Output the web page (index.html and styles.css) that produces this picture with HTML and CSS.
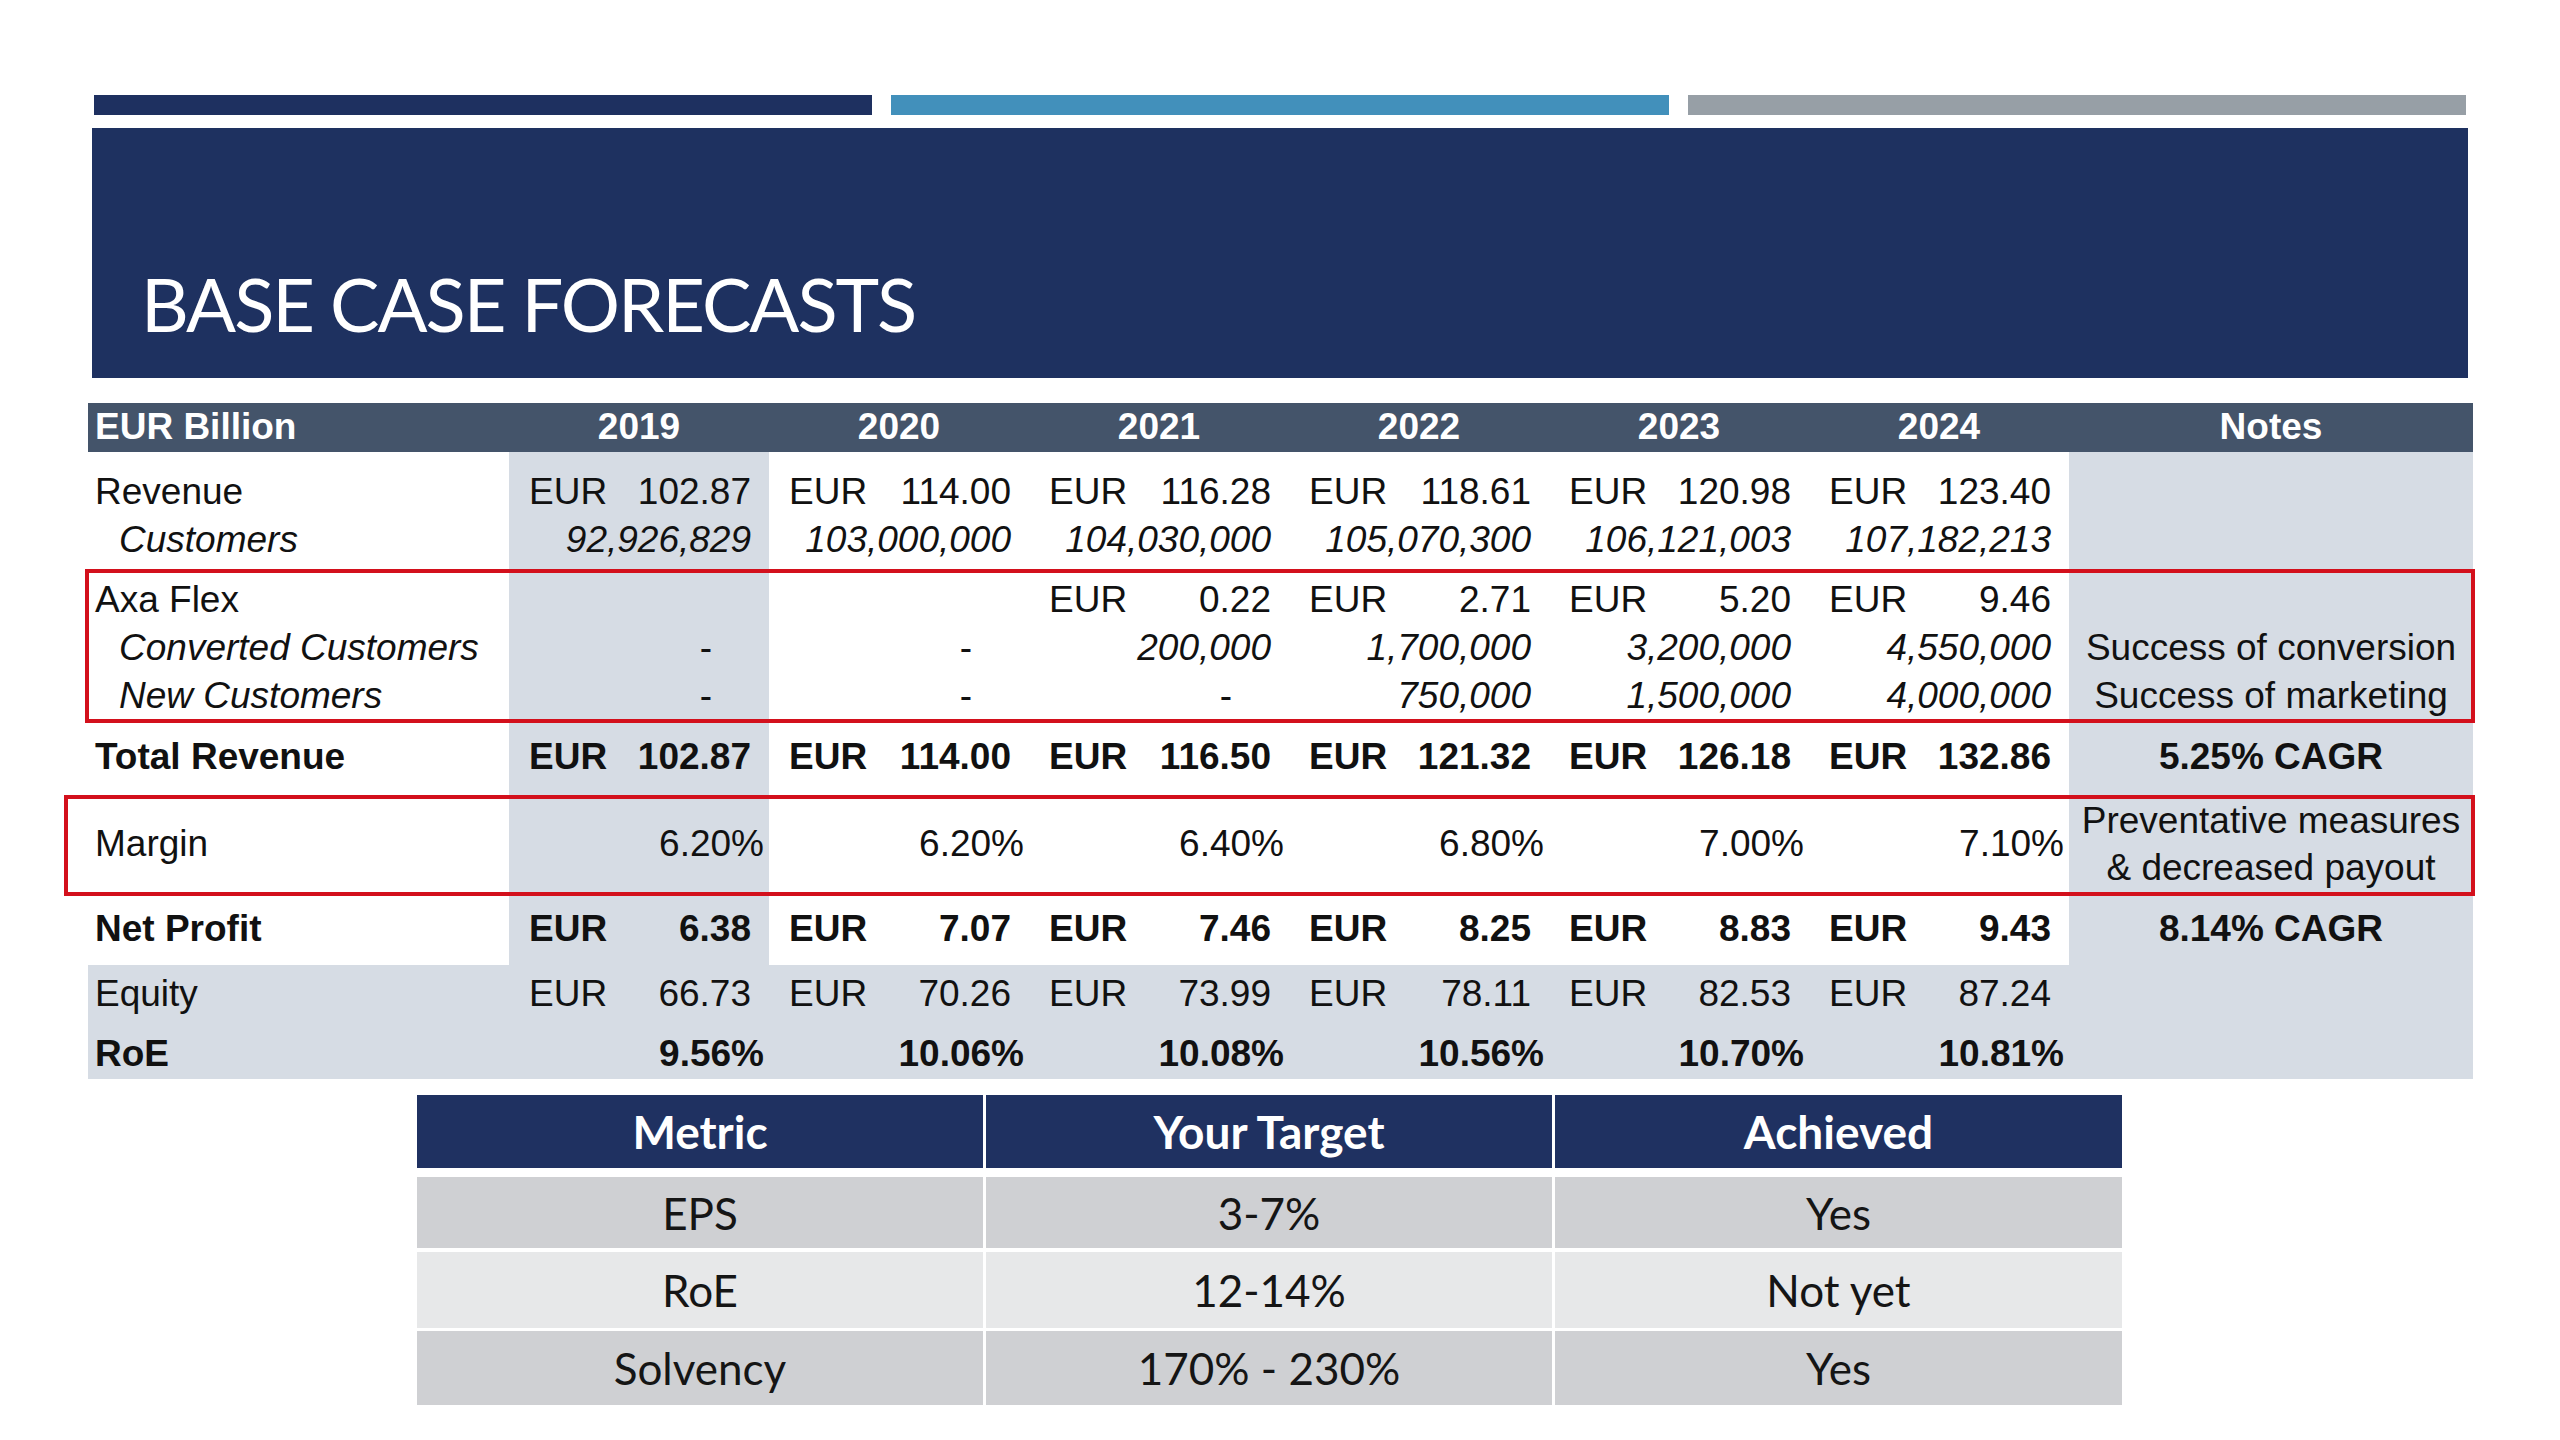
FILE: index.html
```html
<!DOCTYPE html>
<html lang="en">
<head>
<meta charset="utf-8">
<title>Base Case Forecasts</title>
<link rel="stylesheet" href="styles.css">
</head>
<body>
<div class="slide">
  <div class="bars">
    <div class="bar bar-navy"></div>
    <div class="bar bar-blue"></div>
    <div class="bar bar-gray"></div>
  </div>
  <div class="title-block">
    <h1 class="title">BASE CASE FORECASTS</h1>
  </div>

  <div class="fin">
    <div class="row head">
      <div class="c lbl">EUR Billion</div>
      <div class="c yr">2019</div>
      <div class="c yr">2020</div>
      <div class="c yr">2021</div>
      <div class="c yr">2022</div>
      <div class="c yr">2023</div>
      <div class="c yr">2024</div>
      <div class="c yr">Notes</div>
    </div>

    <div class="row r-rev">
      <div class="c lbl">Revenue</div>
      <div class="c y sh"><span>EUR</span><span>102.87</span></div>
      <div class="c y"><span>EUR</span><span>114.00</span></div>
      <div class="c y"><span>EUR</span><span>116.28</span></div>
      <div class="c y"><span>EUR</span><span>118.61</span></div>
      <div class="c y"><span>EUR</span><span>120.98</span></div>
      <div class="c y"><span>EUR</span><span>123.40</span></div>
      <div class="c note sh"></div>
    </div>

    <div class="row r-cust it">
      <div class="c lbl sub">Customers</div>
      <div class="c y num sh"><span>92,926,829</span></div>
      <div class="c y num"><span>103,000,000</span></div>
      <div class="c y num"><span>104,030,000</span></div>
      <div class="c y num"><span>105,070,300</span></div>
      <div class="c y num"><span>106,121,003</span></div>
      <div class="c y num"><span>107,182,213</span></div>
      <div class="c note sh"></div>
    </div>

    <div class="row r-axa">
      <div class="c lbl">Axa Flex</div>
      <div class="c y sh"></div>
      <div class="c y"></div>
      <div class="c y"><span>EUR</span><span>0.22</span></div>
      <div class="c y"><span>EUR</span><span>2.71</span></div>
      <div class="c y"><span>EUR</span><span>5.20</span></div>
      <div class="c y"><span>EUR</span><span>9.46</span></div>
      <div class="c note sh"></div>
    </div>

    <div class="row r-conv">
      <div class="c lbl sub it">Converted Customers</div>
      <div class="c y dash sh"><span>-</span></div>
      <div class="c y dash"><span>-</span></div>
      <div class="c y num it"><span>200,000</span></div>
      <div class="c y num it"><span>1,700,000</span></div>
      <div class="c y num it"><span>3,200,000</span></div>
      <div class="c y num it"><span>4,550,000</span></div>
      <div class="c note sh">Success of conversion</div>
    </div>

    <div class="row r-new">
      <div class="c lbl sub it">New Customers</div>
      <div class="c y dash sh"><span>-</span></div>
      <div class="c y dash"><span>-</span></div>
      <div class="c y dash"><span>-</span></div>
      <div class="c y num it"><span>750,000</span></div>
      <div class="c y num it"><span>1,500,000</span></div>
      <div class="c y num it"><span>4,000,000</span></div>
      <div class="c note sh">Success of marketing</div>
    </div>

    <div class="row r-total bold">
      <div class="c lbl">Total Revenue</div>
      <div class="c y sh"><span>EUR</span><span>102.87</span></div>
      <div class="c y"><span>EUR</span><span>114.00</span></div>
      <div class="c y"><span>EUR</span><span>116.50</span></div>
      <div class="c y"><span>EUR</span><span>121.32</span></div>
      <div class="c y"><span>EUR</span><span>126.18</span></div>
      <div class="c y"><span>EUR</span><span>132.86</span></div>
      <div class="c note sh">5.25% CAGR</div>
    </div>

    <div class="row r-margin">
      <div class="c lbl">Margin</div>
      <div class="c y pct sh"><span>6.20%</span></div>
      <div class="c y pct"><span>6.20%</span></div>
      <div class="c y pct"><span>6.40%</span></div>
      <div class="c y pct"><span>6.80%</span></div>
      <div class="c y pct"><span>7.00%</span></div>
      <div class="c y pct"><span>7.10%</span></div>
      <div class="c note two sh">Preventative measures<br>&amp; decreased payout</div>
    </div>

    <div class="row r-net bold">
      <div class="c lbl">Net Profit</div>
      <div class="c y sh"><span>EUR</span><span>6.38</span></div>
      <div class="c y"><span>EUR</span><span>7.07</span></div>
      <div class="c y"><span>EUR</span><span>7.46</span></div>
      <div class="c y"><span>EUR</span><span>8.25</span></div>
      <div class="c y"><span>EUR</span><span>8.83</span></div>
      <div class="c y"><span>EUR</span><span>9.43</span></div>
      <div class="c note sh">8.14% CAGR</div>
    </div>

    <div class="row r-eq band">
      <div class="c lbl">Equity</div>
      <div class="c y"><span>EUR</span><span>66.73</span></div>
      <div class="c y"><span>EUR</span><span>70.26</span></div>
      <div class="c y"><span>EUR</span><span>73.99</span></div>
      <div class="c y"><span>EUR</span><span>78.11</span></div>
      <div class="c y"><span>EUR</span><span>82.53</span></div>
      <div class="c y"><span>EUR</span><span>87.24</span></div>
      <div class="c note"></div>
    </div>

    <div class="row r-roe band bold">
      <div class="c lbl">RoE</div>
      <div class="c y pct"><span>9.56%</span></div>
      <div class="c y pct"><span>10.06%</span></div>
      <div class="c y pct"><span>10.08%</span></div>
      <div class="c y pct"><span>10.56%</span></div>
      <div class="c y pct"><span>10.70%</span></div>
      <div class="c y pct"><span>10.81%</span></div>
      <div class="c note"></div>
    </div>

    <div class="box box-axa"></div>
    <div class="box box-margin"></div>
  </div>

  <div class="kpi">
    <div class="krow kh">
      <div class="k">Metric</div>
      <div class="k">Your Target</div>
      <div class="k">Achieved</div>
    </div>
    <div class="krow dark k1">
      <div class="k">EPS</div>
      <div class="k">3-7%</div>
      <div class="k">Yes</div>
    </div>
    <div class="krow light k2">
      <div class="k">RoE</div>
      <div class="k">12-14%</div>
      <div class="k">Not yet</div>
    </div>
    <div class="krow dark k3">
      <div class="k">Solvency</div>
      <div class="k">170% - 230%</div>
      <div class="k">Yes</div>
    </div>
  </div>
</div>
</body>
</html>
```

FILE: styles.css
```css
html, body {
  margin: 0;
  padding: 0;
  background: #ffffff;
}

.slide {
  width: 2560px;
  height: 1440px;
  padding-top: 95px;
  box-sizing: border-box;
  overflow: hidden;
}

/* top decorative bars */
.bars {
  display: flex;
  gap: 19px;
  margin-left: 94px;
}
.bar {
  width: 778px;
  height: 20px;
}
.bar-navy { background: #1e3060; }
.bar-blue { background: #4290bb; }
.bar-gray { background: #979fa6; }

/* title */
.title-block {
  margin-top: 13px;
  margin-left: 92px;
  width: 2376px;
  height: 250px;
  background: #1e3160;
  box-sizing: border-box;
  padding-top: 139px;
  padding-left: 49px;
}
.title {
  margin: 0;
  font-family: "Lato", "Open Sans", sans-serif;
  font-weight: 400;
  font-size: 74px;
  line-height: 74px;
  color: #ffffff;
  letter-spacing: -2px;
}

/* financial table */
.fin {
  position: relative;
  margin-top: 25px;
  margin-left: 88px;
  width: 2385px;
  font-family: "Liberation Sans", Arial, sans-serif;
  font-size: 37px;
  color: #111111;
}
.row {
  display: grid;
  grid-template-columns: 421px repeat(6, 260px) 404px;
}
.c {
  line-height: 48px;
  box-sizing: border-box;
  white-space: nowrap;
}
.lbl { padding-left: 7px; }
.lbl.sub { padding-left: 31px; }
.it { font-style: italic; }
.bold { font-weight: 700; }
.sh { background: #d6dce4; }
.band { background: #d6dce4; }

.y {
  display: flex;
  justify-content: space-between;
  padding-left: 20px;
  padding-right: 18px;
}
.y.num { justify-content: flex-end; }
.y.pct { justify-content: flex-end; padding-right: 5px; }
.y.dash { justify-content: flex-end; padding-right: 57px; }
.note { text-align: center; }

.head {
  background: #44546a;
  color: #ffffff;
  font-weight: 700;
  height: 49px;
}
.head .c { line-height: 47px; }
.head .yr { text-align: center; }

.r-rev .c { padding-top: 16px; }
.r-cust .c { padding-bottom: 6px; }
.r-axa .c { padding-top: 6px; }
.r-new .c { padding-bottom: 2px; }
.r-total .c { padding-top: 11px; padding-bottom: 15px; }
.r-margin .c {
  height: 99px;
  padding-bottom: 3px;
  display: flex;
  align-items: center;
}
.r-margin .y { justify-content: flex-end; }
.r-margin .note {
  justify-content: center;
  line-height: 47px;
}
.r-net .c { padding-top: 10px; padding-bottom: 12px; }
.r-eq .c { padding-top: 5px; }
.r-roe .c { padding-top: 12px; padding-bottom: 1px; }

.box {
  position: absolute;
  border: 4px solid #d3101c;
  box-sizing: border-box;
}
.box-axa {
  left: -3px;
  top: 166px;
  width: 2390px;
  height: 154px;
}
.box-margin {
  left: -24px;
  top: 392px;
  width: 2411px;
  height: 101px;
}

/* KPI table */
.kpi {
  margin-top: 16px;
  margin-left: 417px;
  width: 1705px;
  display: flex;
  flex-direction: column;
  font-family: "Lato", "Open Sans", sans-serif;
  font-size: 44px;
  color: #151515;
}
.krow {
  display: grid;
  grid-template-columns: 566px 566px 567px;
  column-gap: 3px;
}
.k {
  display: flex;
  align-items: center;
  justify-content: center;
}
.kh { height: 73px; margin-bottom: 9px; }
.kh .k {
  background: #1f3161;
  color: #ffffff;
  font-weight: 700;
  font-size: 46px;
}
.k1 { height: 71px; }
.k2 { height: 76px; margin-top: 4px; }
.k3 { height: 74px; margin-top: 3px; }
.dark .k { background: #cfd0d3; }
.light .k { background: #e7e8e9; }
```
